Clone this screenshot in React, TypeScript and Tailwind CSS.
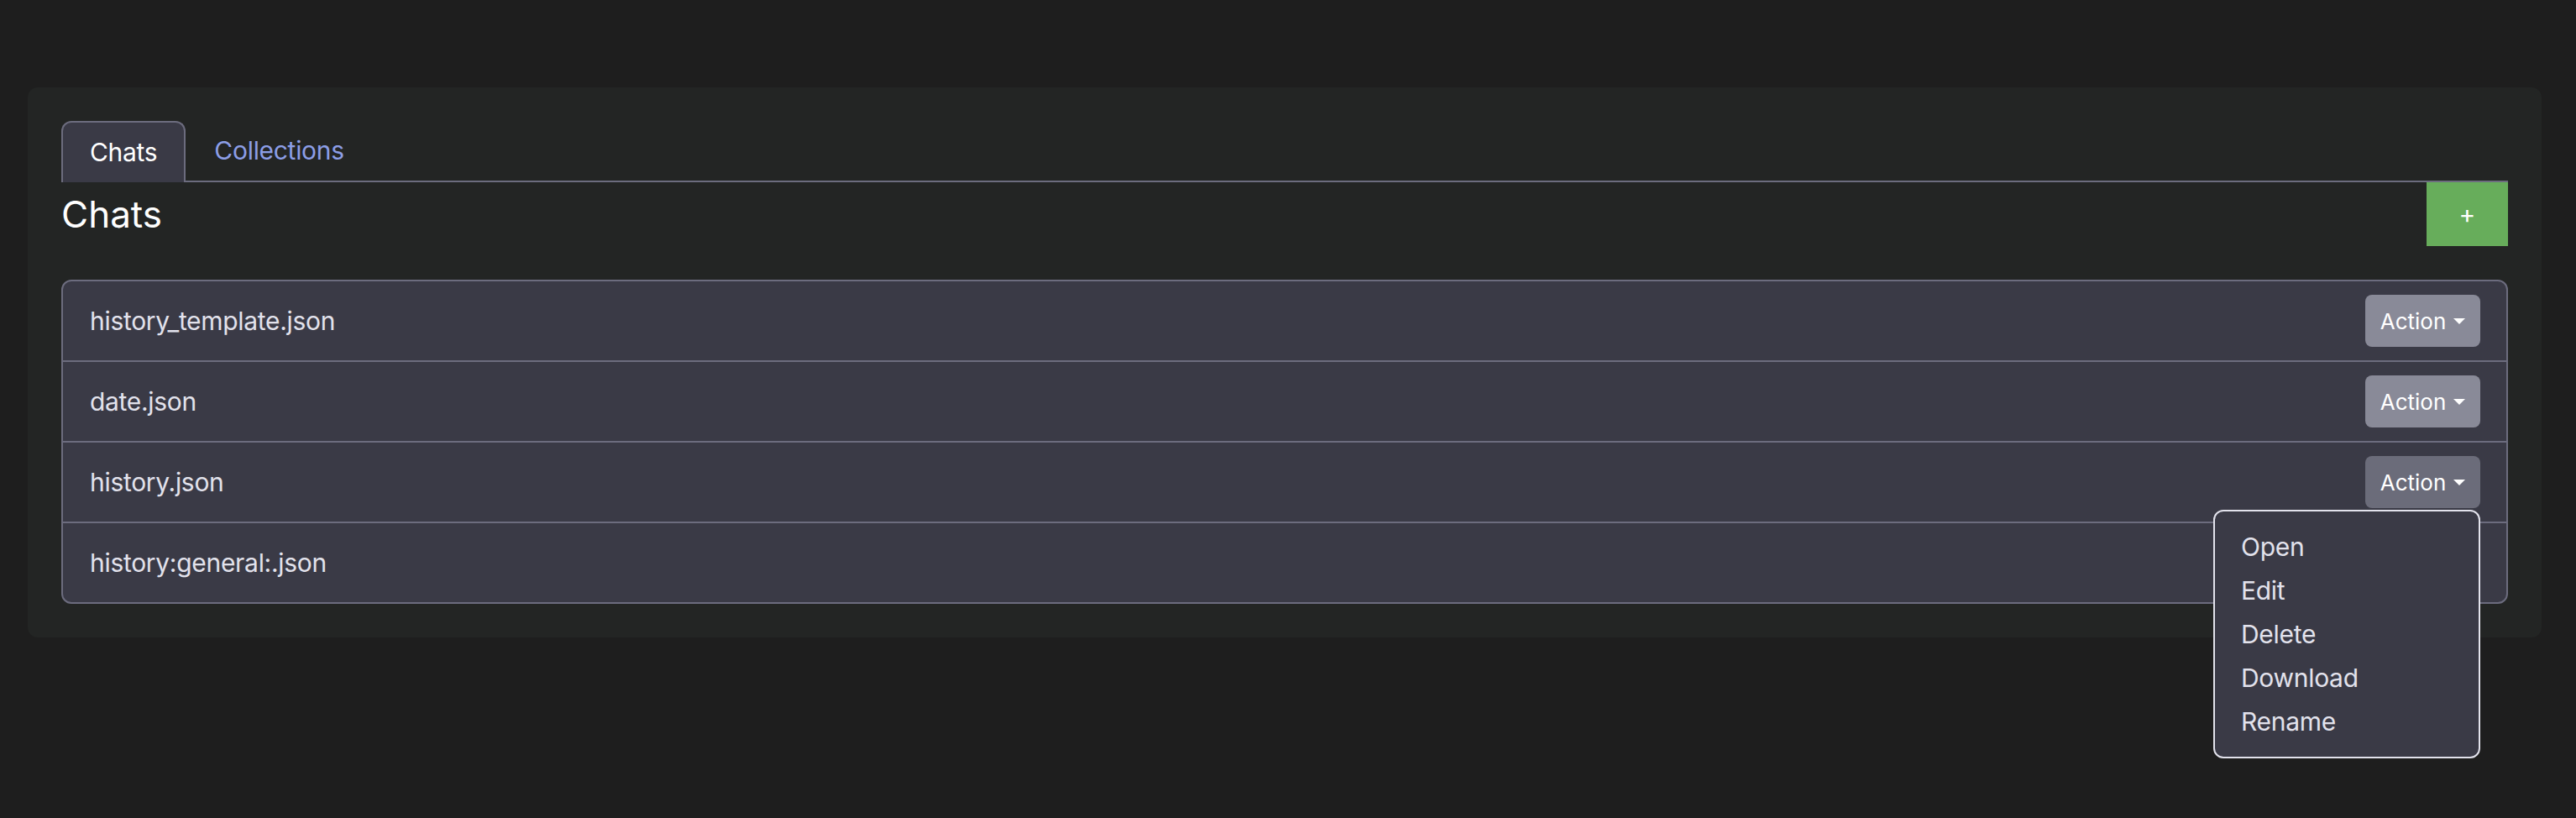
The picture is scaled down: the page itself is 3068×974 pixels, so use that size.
import React from "react";

const files = ["history_template.json", "date.json", "history.json", "history:general:.json"];
const menu = ["Open", "Edit", "Delete", "Download", "Rename"];

const Caret = () => (
  <span className="ml-[9px] inline-block h-0 w-0 border-x-[7px] border-t-[7px] border-x-transparent border-t-white" />
);

export default function App() {
  return (
    <div
      className="min-h-[974px] w-full bg-[#1e1e1e] pt-[104px]"
      style={{ fontFamily: "Inter, 'Noto Sans', sans-serif" }}
    >
      <div className="ml-[33px] w-[2994px] rounded-[12px] bg-[#232524] p-[40px]">
        {/* Tabs */}
        <div className="flex items-end border-b-2 border-[#6c6c7e]">
          <div className="-mb-[2px] flex h-[73px] items-center rounded-t-[12px] border-2 border-b-0 border-[#6c6c7e] bg-[#3a3a46] px-[32px] text-[30px] tracking-[-0.3px] text-white">
            Chats
          </div>
          <div className="flex h-[71px] items-center px-[34px] text-[30px] tracking-[-0.3px] text-[#8c9ee6]">Collections</div>
        </div>

        {/* Header */}
        <div className="flex items-center justify-between">
          <h3 className="text-[44px] font-normal leading-none text-white">Chats</h3>
          <button className="flex h-[76px] w-[97px] items-center justify-center bg-[#67ad5b] text-[30px] text-white">
            +
          </button>
        </div>

        {/* File list */}
        <div className="mt-[40px] rounded-[12px] border-2 border-[#6c6c7e] bg-[#3a3a46]">
          {files.map((name, i) => (
            <div
              key={name}
              className={`relative flex h-[94px] items-center justify-between pl-[32px] pr-[31px] ${
                i > 0 ? "box-content border-t-2 border-[#6c6c7e]" : ""
              }`}
            >
              <span className="text-[30px] tracking-[-0.3px] text-[#e2e2ec]">{name}</span>
              <button
                className={`flex h-[62px] w-[137px] items-center justify-center rounded-[8px] text-[26px] text-white ${
                  i === 2 ? "bg-[#6b6c7a]" : "bg-[#898a98]"
                }`}
              >
                Action
                <Caret />
              </button>
              {i === 2 && (
                <div className="absolute right-[31px] top-[80px] z-10 w-[318px] rounded-[12px] border-2 border-[#e2e2ec] bg-[#3a3a46] py-[16px]">
                  {menu.map((m) => (
                    <div key={m} className="flex h-[52px] items-center px-[31px] text-[30px] tracking-[-0.3px] text-[#e2e2ec]">
                      {m}
                    </div>
                  ))}
                </div>
              )}
            </div>
          ))}
        </div>
      </div>
    </div>
  );
}
